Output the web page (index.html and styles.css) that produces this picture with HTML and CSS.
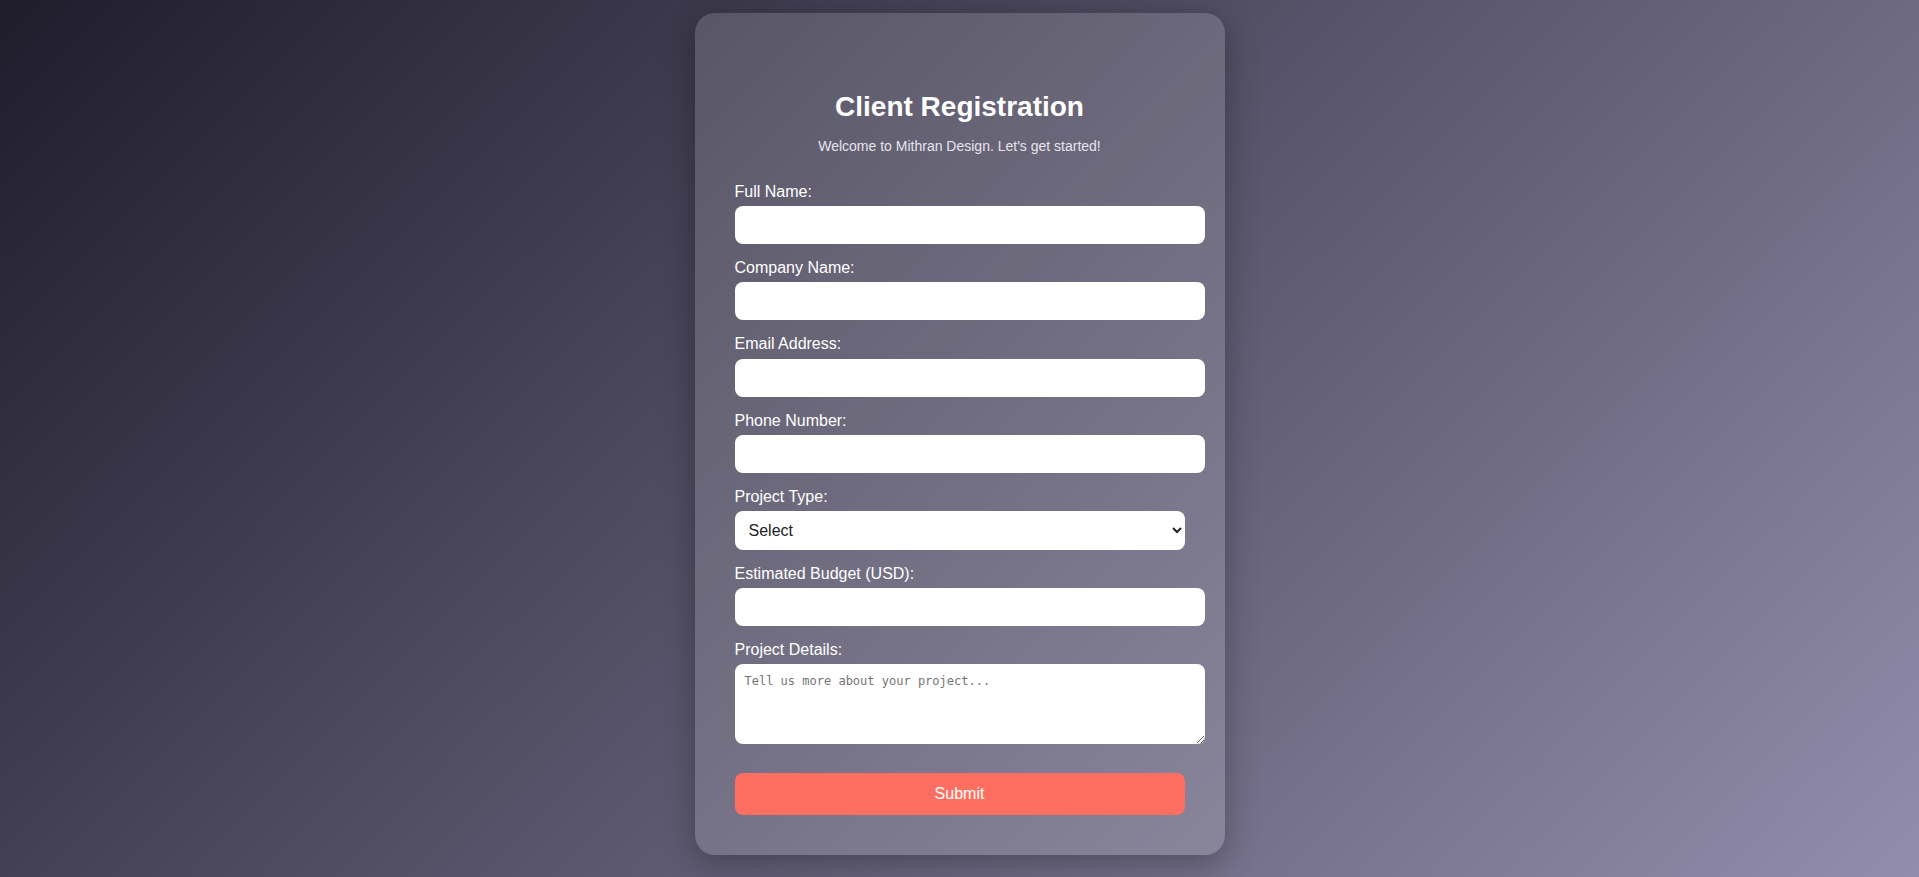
FILE: index.html
```html
<!DOCTYPE html>
<html lang="en">
<head>
<meta charset="UTF-8">
<title>Client Registration</title>
<link rel="stylesheet" href="styles.css">
</head>
<body>
<div class="card">
  <h2 class="title">Client Registration</h2>
  <p class="subtitle">Welcome to Mithran Design. Let's get started!</p>
  <form class="form">
    <label class="label" for="name">Full Name:</label>
    <input class="field" type="text" id="name">
    <label class="label" for="company">Company Name:</label>
    <input class="field" type="text" id="company">
    <label class="label" for="email">Email Address:</label>
    <input class="field" type="email" id="email">
    <label class="label" for="phone">Phone Number:</label>
    <input class="field" type="tel" id="phone">
    <label class="label" for="type">Project Type:</label>
    <select class="select" id="type">
      <option>Select</option>
    </select>
    <label class="label" for="budget">Estimated Budget (USD):</label>
    <input class="field" type="text" id="budget">
    <label class="label" for="details">Project Details:</label>
    <textarea class="area" id="details" placeholder="Tell us more about your project..."></textarea>
    <button class="submit" type="button">Submit</button>
  </form>
</div>
</body>
</html>
```
FILE: styles.css
```css
html, body {
  height: 100%;
}
body {
  margin: 0;
  padding-top: 13px;
  box-sizing: border-box;
  background: linear-gradient(135deg, #1f1c2c, #928dab);
  font-family: "Liberation Sans", Arial, sans-serif;
  color: #fff;
  display: flex;
  justify-content: center;
  align-items: flex-start;
  overflow: hidden;
}
.card {
  width: 450px;
  padding: 40px;
  border-radius: 20px;
  background: rgba(255, 255, 255, 0.15);
  box-shadow: 0 8px 32px rgba(0, 0, 0, 0.3);
}
.title {
  margin: 38px 0 0;
  text-align: center;
  font-size: 28px;
  font-weight: bold;
  line-height: 32px;
}
.subtitle {
  margin: 15px 0 0;
  text-align: center;
  font-size: 14px;
  line-height: 16px;
  color: #e6e4ec;
}
.form {
  margin: 29px 0 0;
  display: block;
}
.label {
  display: block;
  font-size: 16px;
  line-height: 18.2px;
  margin-bottom: 5px;
}
.field {
  display: block;
  width: 100%;
  box-sizing: content-box;
  padding: 10px;
  height: 18px;
  border: none;
  border-radius: 8px;
  margin: 0 0 15px;
  font-family: "Liberation Sans", Arial, sans-serif;
  font-size: 16px;
  background: #fff;
  outline: none;
}
.select {
  display: block;
  width: 100%;
  box-sizing: border-box;
  height: 39px;
  padding: 0 10px;
  border: none;
  border-radius: 8px;
  margin: 0 0 15px;
  font-family: "Liberation Sans", Arial, sans-serif;
  font-size: 16px;
  color: #222;
  background: #fff;
}
.area {
  display: block;
  width: 100%;
  box-sizing: content-box;
  padding: 10px;
  height: 60px;
  border: none;
  border-radius: 8px;
  margin: 0 0 29px;
  font-family: "DejaVu Sans Mono", "Liberation Mono", monospace;
  font-size: 12px;
  background: #fff;
  outline: none;
}
.area::placeholder {
  color: #757575;
}
.submit {
  display: block;
  width: 100%;
  height: 42px;
  border: none;
  border-radius: 8px;
  background: #ff6f61;
  color: #fff;
  font-family: "Liberation Sans", Arial, sans-serif;
  font-size: 16px;
  cursor: pointer;
}
```
